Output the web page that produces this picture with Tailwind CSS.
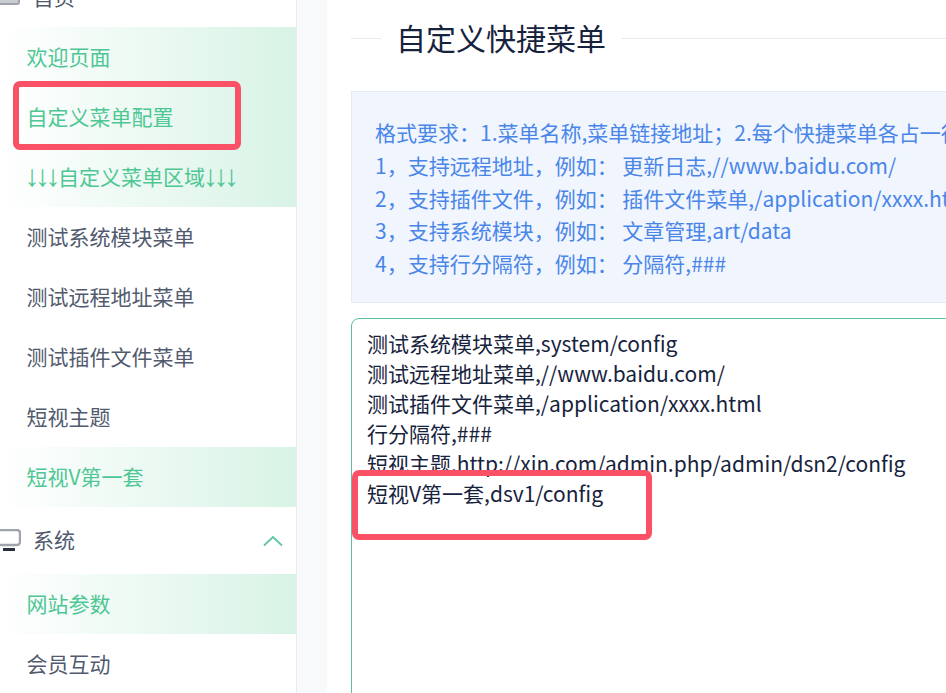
<!DOCTYPE html>
<html lang="zh-CN">
<head>
    <meta charset="UTF-8">
    <title>自定义快捷菜单</title>
    <script src="https://cdn.jsdelivr.net/npm/@tailwindcss/browser@4"></script>
</head>
<body class="w-[946px] h-[693px] overflow-hidden bg-white font-['Noto_Sans_CJK_SC','Noto_Sans',sans-serif]">
    <div class="relative flex h-[693px] overflow-hidden">
        <!-- sidebar -->
        <aside class="w-[297px] shrink-0 border-r border-[#e8eaef] text-[21px] leading-[30px] text-[#515a6e]">
            <div class="flex h-[60px] -mt-[33px] pb-[2px] items-center text-[#515a6e]">
                <svg class="w-[21px] h-[21px] shrink-0" viewBox="0 0 21 21" fill="none"><rect x="-3" y="4" width="22" height="14" rx="2" fill="#c9ccd3" stroke="#9ea3ad" stroke-width="2"/></svg>
                <span class="ml-[12px]">首页</span>
            </div>
            <div class="flex h-[60px] pb-[2px] items-center pl-[26.5px] text-[#4ec794] bg-gradient-to-r from-white to-[#d8f3e6]">欢迎页面</div>
            <div class="flex h-[60px] pb-[2px] items-center pl-[26.5px] text-[#4ec794] bg-gradient-to-r from-white to-[#d8f3e6]">自定义菜单配置</div>
            <div class="flex h-[60px] pb-[2px] items-center pl-[26.5px] text-[#4ec794] bg-gradient-to-r from-white to-[#d8f3e6] whitespace-nowrap"><span class="w-[31.5px] text-[30px] leading-[30px] tracking-[-4.5px] -ml-[2px] mr-[2px] font-['Liberation_Sans']">↓↓↓</span>自定义菜单区域<span class="w-[31.5px] text-[30px] leading-[30px] tracking-[-4.5px] -ml-[2px] font-['Liberation_Sans']">↓↓↓</span></div>
            <div class="flex h-[60px] pb-[2px] items-center pl-[26.5px]">测试系统模块菜单</div>
            <div class="flex h-[60px] pb-[2px] items-center pl-[26.5px]">测试远程地址菜单</div>
            <div class="flex h-[60px] pb-[2px] items-center pl-[26.5px]">测试插件文件菜单</div>
            <div class="flex h-[60px] pb-[2px] items-center pl-[26.5px]">短视主题</div>
            <div class="flex h-[60px] pb-[2px] items-center pl-[26.5px] text-[#4ec794] bg-gradient-to-r from-white to-[#d8f3e6]">短视V第一套</div>
            <div class="flex h-[67px] items-center justify-between pr-[13px]">
                <div class="flex items-center pb-[3px]">
                    <svg class="w-[21px] h-[24px] shrink-0 mt-[3px]" viewBox="0 0 21 24" fill="none"><rect x="-3" y="1" width="23" height="15" rx="3" stroke="#9ea3ad" stroke-width="2.4"/><rect x="3" y="19" width="12" height="3" fill="#2a2f3d"/></svg>
                    <span class="ml-[12px]">系统</span>
                </div>
                <svg class="w-[20px] h-[12px]" viewBox="0 0 20 12" fill="none"><path d="M1 10.5 10 2l9 8.5" stroke="#5fc7a2" stroke-width="1.8"/></svg>
            </div>
            <div class="flex h-[60px] pb-[2px] items-center pl-[26.5px] text-[#4ec794] bg-gradient-to-r from-white to-[#d8f3e6]">网站参数</div>
            <div class="flex h-[60px] pb-[2px] items-center pl-[26.5px]">会员互动</div>
        </aside>
        <div class="w-[30px] shrink-0 bg-[#f8f9fb]"></div>
        <!-- main -->
        <main class="flex-1 min-w-0 pl-[24px] overflow-hidden">
            <div class="flex items-center w-[595px] h-[77px]">
                <div class="w-[30px] h-px bg-[#e8eaec]"></div>
                <h1 class="px-[15px] pb-[3px] text-[30px] leading-[40px] font-normal text-[#17233d] whitespace-nowrap">自定义快捷菜单</h1>
                <div class="flex-1 h-px bg-[#e8eaec]"></div>
            </div>
            <div class="mt-[14px] w-[640px] h-[212px] pl-[23px] pt-[24px] bg-[#f0f5fe] border border-[#e6ebf3] text-[21px] leading-[32.8px] text-[#4a86e8] whitespace-nowrap">
                <p>格式要求：1.菜单名称,菜单链接地址；2.每个快捷菜单各占一行</p>
                <p>1，支持远程地址，例如： 更新日志,//www.baidu.com/</p>
                <p>2，支持插件文件，例如： 插件文件菜单,/application/xxxx.html</p>
                <p>3，支持系统模块，例如： 文章管理,art/data</p>
                <p>4，支持行分隔符，例如： 分隔符,###</p>
            </div>
            <div class="mt-[15px] w-[640px] h-[420px] pl-[15px] pt-[9px] border border-[#5cc29d] rounded-[8px] text-[21px] leading-[30px] text-[#17233d] whitespace-nowrap">
                <p>测试系统模块菜单,system/config</p>
                <p>测试远程地址菜单,//www.baidu.com/</p>
                <p>测试插件文件菜单,/application/xxxx.html</p>
                <p>行分隔符,###</p>
                <p>短视主题,http://xin.com/admin.php/admin/dsn2/config</p>
                <p>短视V第一套,dsv1/config</p>
            </div>
        </main>
        <!-- annotation boxes -->
        <div class="absolute left-[13px] top-[81px] w-[228px] h-[69px] border-[6px] border-[#fb5166] rounded-[7px]"></div>
        <div class="absolute left-[352px] top-[470px] w-[300px] h-[70px] border-[6px] border-[#fb5166] rounded-[7px]"></div>
    </div>
</body>
</html>
